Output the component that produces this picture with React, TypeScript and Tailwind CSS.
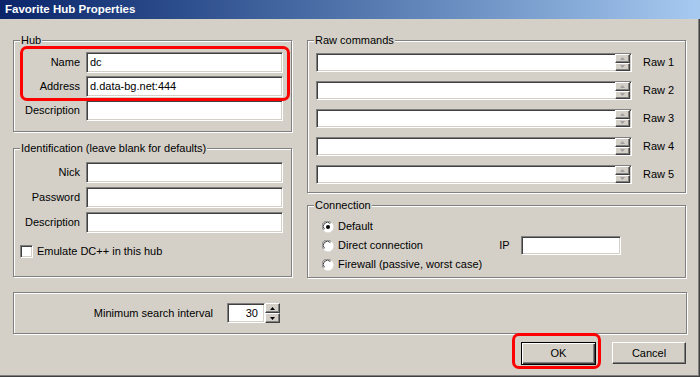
import React from 'react';

const sunken =
  'bg-white border border-t-[#808080] border-l-[#808080] border-r-white border-b-white shadow-[inset_1px_1px_0_#404040,inset_-1px_-1px_0_#d4d0c8]';
const raised =
  'bg-[#d4d0c8] border border-t-white border-l-white border-r-[#404040] border-b-[#404040] shadow-[inset_-1px_-1px_0_#808080]';
const etched = 'relative border border-[#808080] shadow-[inset_1px_1px_0_#fff,1px_1px_0_#fff]';

const Arrow = ({ up, color }: { up?: boolean; color: string }) => (
  <svg width="5" height="3" viewBox="0 0 5 3">
    {up ? <path d="M2.5 0 L5 3 L0 3 Z" fill={color} /> : <path d="M0 0 L5 0 L2.5 3 Z" fill={color} />}
  </svg>
);

const GroupBox = ({ title, className, children }: { title: string; className: string; children?: React.ReactNode }) => (
  <div className={`${etched} ${className}`}>
    <span className="absolute -top-[7px] left-[6px] px-[1px] bg-[#d4d0c8] leading-[13px]">{title}</span>
    {children}
  </div>
);

const Field = ({ label, value }: { label: string; value?: string }) => (
  <div className="flex items-center">
    <span className="w-[66px] text-right">{label}</span>
    <div className={`${sunken} ml-[6px] w-[197px] h-[21px] pl-[3px] flex items-center`}>{value}</div>
  </div>
);

const RawRow = ({ n }: { n: number }) => (
  <div className="flex items-center">
    <div className={`${sunken} w-[316px] h-[19px] flex justify-end`}>
      <div className="flex flex-col w-[15px] mr-[1px]">
        <div className={`${raised} flex-1 flex items-center justify-center`}>
          <Arrow up color="#a0a0a0" />
        </div>
        <div className={`${raised} flex-1 flex items-center justify-center`}>
          <Arrow color="#a0a0a0" />
        </div>
      </div>
    </div>
    <span className="ml-[11px]">Raw {n}</span>
  </div>
);

const Radio = ({ checked, label }: { checked?: boolean; label: string }) => (
  <div className="flex items-center h-[19px]">
    <svg width="12" height="12" viewBox="0 0 12 12" className="ml-[14px]">
      <circle cx="6" cy="6" r="5.5" fill="#fff" />
      <path d="M1.5 9 A5 5 0 0 1 9 1.5" stroke="#808080" strokeWidth="1" fill="none" />
      <path d="M2.5 8.3 A4 4 0 0 1 8.3 2.5" stroke="#404040" strokeWidth="1" fill="none" />
      {checked && <circle cx="6" cy="6" r="2" fill="#000" />}
    </svg>
    <span className="ml-[4px]">{label}</span>
  </div>
);

export default function App() {
  return (
    <div className="relative w-[700px] h-[377px] bg-[#d4d0c8] text-[11px] text-black font-['Liberation_Sans',Arial,sans-serif] shadow-[inset_-1px_-1px_0_#404040,inset_-2px_-2px_0_#808080] overflow-hidden">
      <div className="h-[19px] bg-linear-to-r from-[#0a246a] to-[#a6caf0] flex items-center pl-[5px]">
        <span className="text-white font-bold text-[11.5px]">Favorite Hub Properties</span>
      </div>

      <div className="px-[13px] pt-[21px]">
        <div className="flex gap-[15px]">
          <div className="w-[279px] flex flex-col gap-[16px]">
            <GroupBox title="Hub" className="h-[92px] pt-[11px] flex flex-col gap-[3px]">
              <Field label="Name" value="dc" />
              <Field label="Address" value="d.data-bg.net:444" />
              <Field label="Description" />
            </GroupBox>
            <GroupBox title="Identification (leave blank for defaults)" className="h-[129px] pt-[13px] flex flex-col gap-[4px]">
              <Field label="Nick" />
              <Field label="Password" />
              <Field label="Description" />
              <div className="flex items-center mt-[6px] ml-[6px]">
                <div className={`${sunken} w-[13px] h-[13px]`} />
                <span className="ml-[4px]">Emulate DC++ in this hub</span>
              </div>
            </GroupBox>
          </div>

          <div className="w-[379px] flex flex-col gap-[12px]">
            <GroupBox title="Raw commands" className="h-[153px] pt-[12px] pl-[8px] flex flex-col gap-[9px]">
              {[1, 2, 3, 4, 5].map((n) => (
                <RawRow key={n} n={n} />
              ))}
            </GroupBox>
            <GroupBox title="Connection" className="h-[73px] pt-[11px] flex">
              <div className="flex flex-col">
                <Radio checked label="Default" />
                <Radio label="Direct connection" />
                <Radio label="Firewall (passive, worst case)" />
              </div>
              <div className="flex items-center h-[19px] mt-[19px] ml-[17px]">
                <span>IP</span>
                <div className={`${sunken} ml-[11px] w-[100px] h-[19px]`} />
              </div>
            </GroupBox>
          </div>
        </div>

        <div className={`${etched} mt-[14px] h-[42px] flex items-center`}>
          <span className="w-[199px] text-right">Minimum search interval</span>
          <div className={`${sunken} ml-[14px] w-[38px] h-[20px] flex items-center justify-end pr-[6px]`}>30</div>
          <div className="flex flex-col w-[15px] h-[20px]">
            <div className={`${raised} flex-1 flex items-center justify-center`}>
              <Arrow up color="#000" />
            </div>
            <div className={`${raised} flex-1 flex items-center justify-center`}>
              <Arrow color="#000" />
            </div>
          </div>
        </div>

        <div className="flex justify-end gap-[16px] mt-[8px] pr-[1px]">
          <button className="w-[75px] h-[23px] bg-[#d4d0c8] border border-black shadow-[inset_1px_1px_0_#fff,inset_-1px_-1px_0_#404040,inset_-2px_-2px_0_#808080]">
            OK
          </button>
          <button className={`${raised} w-[74px] h-[22px]`}>Cancel</button>
        </div>
      </div>

      <div className="absolute left-[20px] top-[46px] w-[270px] h-[55px] border-[3px] border-[#f00] rounded-[7px]" />
      <div className="absolute left-[512px] top-[333px] w-[89px] h-[36px] border-[3px] border-[#f00] rounded-[7px]" />
    </div>
  );
}
